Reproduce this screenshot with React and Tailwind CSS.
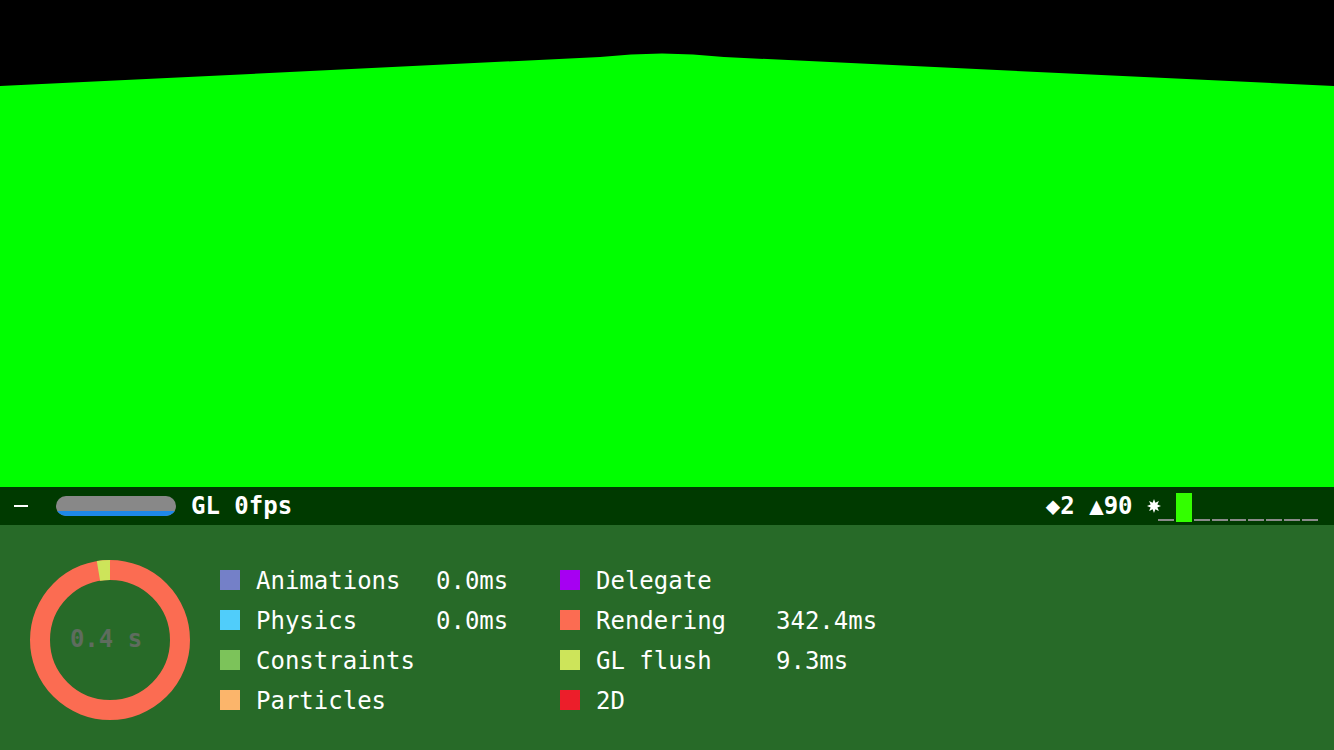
import React from "react";

const mono = { fontFamily: '"DejaVu Sans Mono", "Liberation Mono", monospace' };

const left = [
  { name: "Animations", color: "bg-[#7480c8]", value: "0.0ms" },
  { name: "Physics", color: "bg-[#50cdfa]", value: "0.0ms" },
  { name: "Constraints", color: "bg-[#7cc35a]", value: "" },
  { name: "Particles", color: "bg-[#fbb56b]", value: "" },
];

const right = [
  { name: "Delegate", color: "bg-[#a600f2]", value: "" },
  { name: "Rendering", color: "bg-[#fb6c52]", value: "342.4ms" },
  { name: "GL flush", color: "bg-[#cde45a]", value: "9.3ms" },
  { name: "2D", color: "bg-[#ec1e2a]", value: "" },
];

function Legend({ rows }) {
  return (
    <div className="flex flex-col w-[340px]">
      {rows.map((r) => (
        <div key={r.name} className="flex items-center h-10">
          <div className={`w-5 h-5 ${r.color}`} />
          <div className="ml-4 w-[180px] text-[24px] text-white leading-none pt-[2px]">{r.name}</div>
          <div className="text-[24px] text-white leading-none pt-[2px]">{r.value}</div>
        </div>
      ))}
    </div>
  );
}

function Donut() {
  const c = 2 * Math.PI * 70;
  const flush = (c * 9.3) / 351.7;
  return (
    <div className="relative w-40 h-40">
      <svg width="160" height="160" viewBox="0 0 160 160">
        <circle cx="80" cy="80" r="70" fill="none" stroke="#fb6c52" strokeWidth="20" />
        <circle
          cx="80"
          cy="80"
          r="70"
          fill="none"
          stroke="#cde45a"
          strokeWidth="20"
          strokeDasharray={`${flush} 500`}
          transform="rotate(-99.5 80 80)"
        />
      </svg>
      <div className="absolute inset-0 flex items-center justify-center text-[24px] font-bold text-[#5e6c5e] pb-[3px] pr-2">
        0.4 s
      </div>
    </div>
  );
}

function Star() {
  // 8-point burst, drawn small like the reference glyph
  const pts = [];
  for (let i = 0; i < 16; i++) {
    const a = (Math.PI * 2 * i) / 16 - Math.PI / 2;
    const r = i % 2 === 0 ? 7 : 3.6;
    pts.push(`${(7 + r * Math.cos(a)).toFixed(2)},${(7 + r * Math.sin(a)).toFixed(2)}`);
  }
  return (
    <span className="w-[11px] h-[14px] flex items-center">
      <svg width="14" height="14" viewBox="0 0 14 14" className="overflow-visible shrink-0">
        <polygon points={pts.join(" ")} fill="#ffffff" />
      </svg>
    </span>
  );
}

function Graph() {
  const slots = [0, 29, 0, 0, 0, 0, 0, 0, 0];
  return (
    <div className="flex items-end h-[30px] mt-[2px]">
      {slots.map((h, i) => (
        <div key={i} className="w-[18px] flex items-end">
          {h ? (
            <div className="w-4 h-[29px] bg-[#33ff00]" />
          ) : (
            <div className="w-4 h-[2px] mb-[1px] bg-[#8a8a8a]" />
          )}
        </div>
      ))}
    </div>
  );
}

export default function App() {
  return (
    <div className="w-[1334px] h-[750px] flex flex-col overflow-hidden" style={mono}>
      <div className="h-[487px] bg-black">
        <svg width="1334" height="487" viewBox="0 0 1334 487">
          <path d="M0 86 L600 57 Q662 50 724 57 L1334 86 L1334 487 L0 487 Z" fill="#00ff00" />
        </svg>
      </div>

      <div className="h-[38px] bg-[#003a00] flex items-center text-white font-bold text-[24px] leading-none">
        <div className="ml-[14px] w-[14px] h-[2px] bg-white mb-[1px]" />
        <div className="ml-7 w-[120px] h-5 rounded-full overflow-hidden bg-[#888888] flex flex-col justify-end">
          <div className="h-[5px] bg-[#1e88e8]" />
        </div>
        <div className="ml-[15px]">GL 0fps</div>
        <div className="ml-auto flex items-center">
          <span className="whitespace-pre">◆2 ▲90 </span>
          <Star />
          <Graph />
          <div className="w-[14px]" />
        </div>
      </div>

      <div className="flex-1 bg-[#276a28] flex pt-[35px] pl-[30px]">
        <Donut />
        <div className="ml-[30px] flex">
          <Legend rows={left} />
          <Legend rows={right} />
        </div>
      </div>
    </div>
  );
}
